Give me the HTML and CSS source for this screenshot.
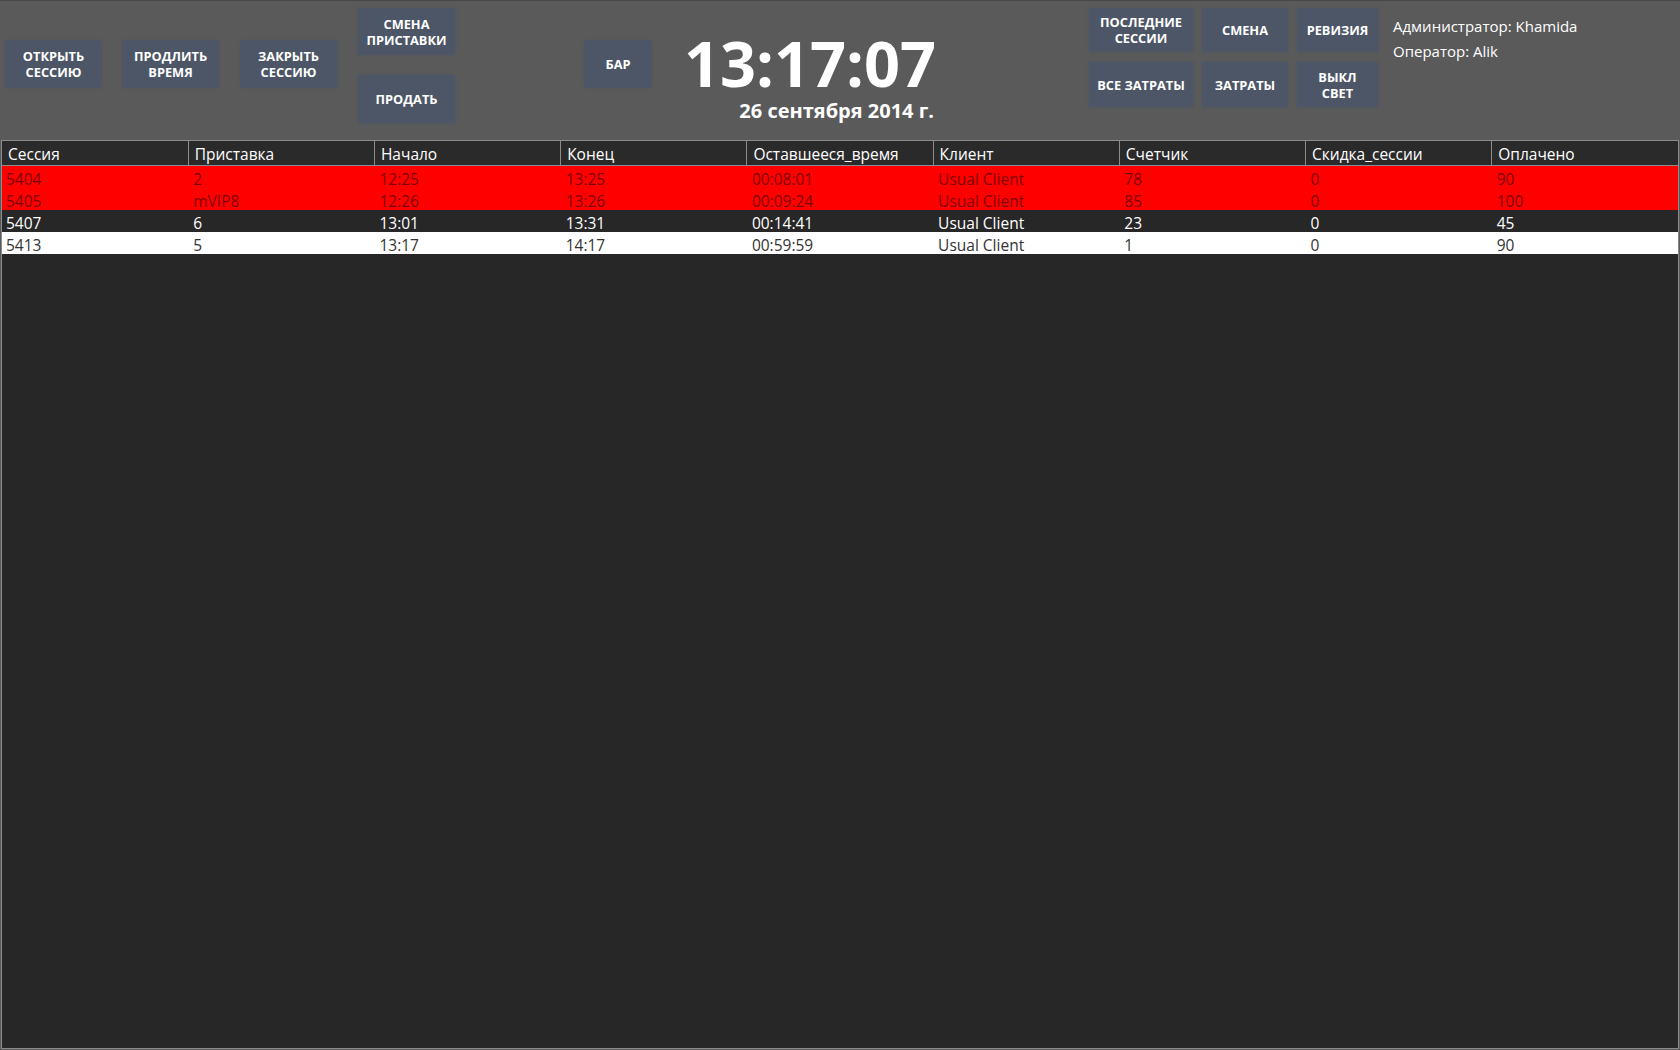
FILE: index.html
```html
<!DOCTYPE html>
<html lang="ru">
<head>
<meta charset="utf-8">
<title>Сессии</title>
<link rel="stylesheet" href="styles.css">
</head>
<body>
<div class="page">
  <header class="topbar">
    <button class="btn btn-main b1">ОТКРЫТЬ<br>СЕССИЮ</button>
    <button class="btn btn-main b2">ПРОДЛИТЬ<br>ВРЕМЯ</button>
    <button class="btn btn-main b3">ЗАКРЫТЬ<br>СЕССИЮ</button>
    <div class="col4">
      <button class="btn btn-col">СМЕНА<br>ПРИСТАВКИ</button>
      <button class="btn btn-col btn-col2">ПРОДАТЬ</button>
    </div>
    <button class="btn btn-bar">БАР</button>
    <div class="clock-block">
      <div class="clock">13:17:07</div>
      <div class="date">26 сентября 2014 г.</div>
    </div>
    <div class="grid-btns">
      <button class="btn">ПОСЛЕДНИЕ<br>СЕССИИ</button>
      <button class="btn">СМЕНА</button>
      <button class="btn">РЕВИЗИЯ</button>
      <button class="btn">ВСЕ ЗАТРАТЫ</button>
      <button class="btn">ЗАТРАТЫ</button>
      <button class="btn">ВЫКЛ<br>СВЕТ</button>
    </div>
    <div class="users">
      <div>Администратор: Khamida</div>
      <div>Оператор: Alik</div>
    </div>
  </header>
  <main class="table-wrap">
    <table class="sessions">
      <thead>
        <tr>
          <th>Сессия</th><th>Приставка</th><th>Начало</th><th>Конец</th><th>Оставшееся_время</th><th>Клиент</th><th>Счетчик</th><th>Скидка_сессии</th><th>Оплачено</th>
        </tr>
      </thead>
      <tbody>
        <tr class="row-red"><td>5404</td><td>2</td><td>12:25</td><td>13:25</td><td>00:08:01</td><td>Usual Client</td><td>78</td><td>0</td><td>90</td></tr>
        <tr class="row-red"><td>5405</td><td>mVIP8</td><td>12:26</td><td>13:26</td><td>00:09:24</td><td>Usual Client</td><td>85</td><td>0</td><td>100</td></tr>
        <tr class="row-dark"><td>5407</td><td>6</td><td>13:01</td><td>13:31</td><td>00:14:41</td><td>Usual Client</td><td>23</td><td>0</td><td>45</td></tr>
        <tr class="row-white"><td>5413</td><td>5</td><td>13:17</td><td>14:17</td><td>00:59:59</td><td>Usual Client</td><td>1</td><td>0</td><td>90</td></tr>
      </tbody>
    </table>
  </main>
</div>
</body>
</html>
```
FILE: styles.css
```css
html, body {
  margin: 0;
  padding: 0;
  height: 100%;
}
body {
  background: #5a5a5a;
  font-family: "Open Sans", "Noto Sans", sans-serif;
  color: #fff;
}
.page {
  height: 100vh;
  display: flex;
  flex-direction: column;
}
.topbar {
  height: 139px;
  flex: 0 0 139px;
  border-top: 1px solid #474747;
  background: #5a5a5a;
  display: flex;
  align-items: flex-start;
  padding-left: 5px;
  box-sizing: content-box;
}
.btn {
  border: 0;
  margin: 0;
  padding: 0;
  background: #4d5666;
  color: #fff;
  font-family: "Open Sans", "Noto Sans", sans-serif;
  font-weight: 700;
  font-size: 12.8px;
  line-height: 16px;
  text-align: center;
  box-shadow: 0 0 2px rgba(77, 86, 102, 0.8);
  cursor: pointer;
}
.btn-main {
  width: 97px;
  height: 48px;
  margin-top: 39px;
}
.b2 { margin-left: 20px; }
.b3 { margin-left: 21px; }
.col4 {
  margin-left: 21px;
  margin-top: 7px;
  width: 97px;
  display: flex;
  flex-direction: column;
  gap: 20px;
}
.btn-col {
  height: 47px;
}
.btn-col2 {
  height: 48px;
}
.btn-bar {
  width: 68px;
  height: 48px;
  margin-left: 129px;
  margin-top: 39px;
}
.clock-block {
  width: 252px;
  margin-left: 32px;
  margin-top: 30px;
  display: flex;
  flex-direction: column;
  align-items: flex-end;
}
.clock {
  font-size: 63px;
  line-height: 63px;
  font-weight: 700;
}
.date {
  margin-top: 7px;
  font-size: 20px;
  line-height: 20px;
  font-weight: 700;
  padding-right: 2px;
}
.grid-btns {
  margin-left: 153px;
  margin-top: 7px;
  display: grid;
  grid-template-columns: 104px 86px 81px;
  grid-template-rows: 44px 45px;
  gap: 10px 9px;
}
.users {
  margin-left: 15px;
  margin-top: 13px;
  font-size: 15px;
  line-height: 24.5px;
}
.table-wrap {
  flex: 1 1 auto;
  margin: 0 1px 1px 1px;
  border: 1px solid #8c8c8c;
  background: #272727;
  overflow: hidden;
}
.sessions {
  width: 100%;
  border-collapse: collapse;
  table-layout: fixed;
  font-size: 15.5px;
}
.sessions th {
  text-align: left;
  font-weight: 400;
  color: #fff;
  background: #2a2a2a;
  padding: 3px 0 0 6px;
  height: 21px;
  line-height: 21px;
  border-right: 1px solid #8c8c8c;
  border-bottom: 1px solid #8c8c8c;
  white-space: nowrap;
  vertical-align: top;
}
.sessions th:last-child {
  border-right: 0;
}
.sessions td {
  padding: 4px 0 0 5px;
  height: 18px;
  line-height: 18px;
  white-space: nowrap;
  vertical-align: top;
}
.sessions td:first-child {
  padding-left: 4px;
}
.row-red td {
  background: #ff0000;
  color: #7d0000;
}
.row-dark td {
  background: #272727;
  color: #fff;
}
.row-white td {
  background: #ffffff;
  color: #333;
}
```
